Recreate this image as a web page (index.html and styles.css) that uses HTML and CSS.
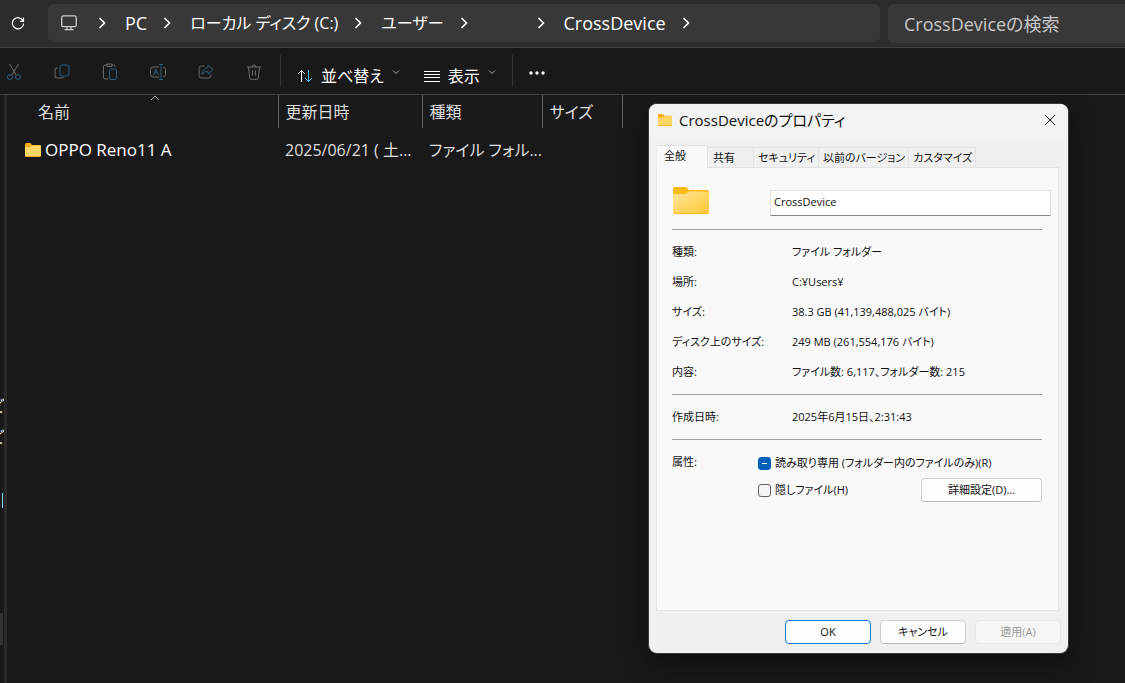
FILE: index.html
```html
<!DOCTYPE html>
<html lang="ja">
<head>
<meta charset="utf-8">
<title>CrossDevice</title>
<link rel="stylesheet" href="styles.css">
</head>
<body>

<header class="topbar">
	<button class="refresh" aria-label="更新">
		<svg width="14" height="14" viewBox="0 0 14 14"><path d="M12.2 5.2A5.6 5.6 0 1 0 12.6 7.4M12.5 1.6V5.3H8.8"/></svg>
	</button>
	<nav class="address">
		<svg class="monitor" width="16" height="16" viewBox="0 0 16 16"><rect x="0.7" y="0.9" width="14.6" height="10.8" rx="1.8"/><path d="M6 12v2.6M10 12v2.6M3.5 14.6h9"/></svg>
		<svg class="sep" width="8" height="12" viewBox="0 0 8 12"><path d="M1.5 1l5 5-5 5"/></svg>
		<a href="#">PC</a>
		<svg class="sep" width="8" height="12" viewBox="0 0 8 12"><path d="M1.5 1l5 5-5 5"/></svg>
		<a class="kana" href="#">ローカル ディスク (C:)</a>
		<svg class="sep" width="8" height="12" viewBox="0 0 8 12"><path d="M1.5 1l5 5-5 5"/></svg>
		<a class="kana" href="#">ユーザー</a>
		<svg class="sep" width="8" height="12" viewBox="0 0 8 12"><path d="M1.5 1l5 5-5 5"/></svg>
		<span class="user"></span>
		<svg class="sep" width="8" height="12" viewBox="0 0 8 12"><path d="M1.5 1l5 5-5 5"/></svg>
		<a href="#">CrossDevice</a>
		<svg class="sep" width="8" height="12" viewBox="0 0 8 12"><path d="M1.5 1l5 5-5 5"/></svg>
	</nav>
	<input class="search" type="search" placeholder="CrossDeviceの検索" aria-label="検索">
</header>

<div class="toolbar">
	<div class="tools">
		<button aria-label="切り取り" disabled>
			<svg width="16" height="18" viewBox="0 0 16 18"><path d="M3.5 1l6.7 11M12.5 1L5.8 12"/><g class="blue"><circle cx="4" cy="14" r="2.5"/><circle cx="12" cy="14" r="2.5"/></g></svg>
		</button>
		<button aria-label="コピー" disabled>
			<svg width="16" height="18" viewBox="0 0 16 18"><path d="M4 5H3a2 2 0 0 0-2 2v6a2 2 0 0 0 2 2h5a2 2 0 0 0 1.8-1.2"/><rect class="blue" x="6" y="2" width="9" height="11" rx="2"/></svg>
		</button>
		<button aria-label="貼り付け" disabled>
			<svg width="16" height="18" viewBox="0 0 16 18"><path d="M6 16H3a1.5 1.5 0 0 1-1.5-1.5v-11A1.5 1.5 0 0 1 3 2h2M10 2h1.5A1.5 1.5 0 0 1 13 3.5V4M5 1h5v2.5H5z"/><rect class="blue" x="7.5" y="6" width="7" height="10.5" rx="1.5"/></svg>
		</button>
		<button aria-label="名前の変更" disabled>
			<svg width="16" height="18" viewBox="0 0 16 18"><path d="M9 14H3a2.5 2.5 0 0 1-2.5-2.5v-5A2.5 2.5 0 0 1 3 4h6M13 4a2.5 2.5 0 0 1 2.5 2.5v5A2.5 2.5 0 0 1 13 14"/><path class="blue" d="M3.5 12L6 6l2.5 6M4.4 10h3.2M11 2v14M9 1.5h4M9 16.5h4"/></svg>
		</button>
		<button aria-label="共有" disabled>
			<svg width="16" height="18" viewBox="0 0 16 18"><path d="M6 3H3.5A2.5 2.5 0 0 0 1 5.5v7A2.5 2.5 0 0 0 3.5 15h7a2.5 2.5 0 0 0 2.5-2.5V11"/><path class="blue" d="M10 2l5 4.5-5 4.5V8.5C7 8.3 5.5 9.3 4 11.5 4.3 7.5 6.5 4.9 10 4.6z"/></svg>
		</button>
		<button aria-label="削除" disabled>
			<svg width="16" height="18" viewBox="0 0 16 18"><path d="M1 4h14M6 4a2 2 0 0 1 4 0M2.5 4l1.2 11a1.5 1.5 0 0 0 1.5 1.3h5.6a1.5 1.5 0 0 0 1.5-1.3L13.5 4M6.5 7.5v5M9.5 7.5v5"/></svg>
		</button>
	</div>
	<button class="menu">
		<svg width="16" height="16" viewBox="0 0 16 16"><path d="M4.5 14V2.5M1 6l3.5-3.5L8 6"/><path class="bright" d="M11.5 2v11.5M8 10l3.5 3.5L15 10"/></svg>
		<span>並べ替え</span>
		<svg class="down" width="8" height="6" viewBox="0 0 8 6"><path d="M1 1.5l3 3 3-3"/></svg>
	</button>
	<button class="menu">
		<svg width="16" height="16" viewBox="0 0 16 16"><path d="M0 3.5h16M0 6.5h16M0 9.5h16M0 13.5h16"/></svg>
		<span>表示</span>
		<svg class="down" width="8" height="6" viewBox="0 0 8 6"><path d="M1 1.5l3 3 3-3"/></svg>
	</button>
	<button class="more" aria-label="その他">
		<svg width="18" height="4" viewBox="0 0 18 4"><circle cx="3" cy="2" r="1.7"/><circle cx="9" cy="2" r="1.7"/><circle cx="15" cy="2" r="1.7"/></svg>
	</button>
</div>

<main class="explorer">
	<aside class="tree">
		<ul>
			<li>ど</li>
			<li>ど</li>
			<li class="bar"></li>
		</ul>
		<div class="thumb"></div>
	</aside>
	<table class="files">
		<colgroup><col class="c-name"><col class="c-date"><col class="c-type"><col class="c-size"></colgroup>
		<thead>
			<tr>
				<th aria-sort="ascending">名前<svg class="sorted" width="10" height="6" viewBox="0 0 10 6"><path d="M1 5l4-4 4 4"/></svg></th>
				<th>更新日時</th>
				<th>種類</th>
				<th>サイズ</th>
			</tr>
		</thead>
		<tbody>
			<tr>
				<td class="name">
					<svg width="16" height="14" viewBox="0 0 36 28" preserveAspectRatio="none"><path fill="#f5ac10" d="M0 3a3 3 0 0 1 3-3h9l4 4h17a3 3 0 0 1 3 3v18a3 3 0 0 1-3 3H3a3 3 0 0 1-3-3z"/><path fill="#ffd766" d="M0 8h13l4-3h19v19a2 2 0 0 1-2 2H2a2 2 0 0 1-2-2z"/></svg>
					<span>OPPO Reno11 A</span>
				</td>
				<td>2025/06/21 ( 土...</td>
				<td>ファイル フォル...</td>
				<td></td>
			</tr>
		</tbody>
	</table>
</main>

<section class="dialog" role="dialog" aria-labelledby="dlg-title">
	<div class="titlebar">
		<svg width="14" height="12" viewBox="0 0 36 28" preserveAspectRatio="none"><path fill="#f5ac10" d="M0 3a3 3 0 0 1 3-3h9l4 4h17a3 3 0 0 1 3 3v18a3 3 0 0 1-3 3H3a3 3 0 0 1-3-3z"/><path fill="#ffd766" d="M0 8h13l4-3h19v19a2 2 0 0 1-2 2H2a2 2 0 0 1-2-2z"/></svg>
		<h1 id="dlg-title">CrossDeviceのプロパティ</h1>
		<button class="close" aria-label="閉じる">
			<svg width="12" height="12" viewBox="0 0 12 12"><path d="M1 1l10 10M11 1L1 11"/></svg>
		</button>
	</div>

	<div class="tabs" role="tablist">
		<button role="tab" aria-selected="true">全般</button>
		<button role="tab">共有</button>
		<button role="tab">セキュリティ</button>
		<button role="tab">以前のバージョン</button>
		<button role="tab">カスタマイズ</button>
	</div>

	<div class="panel" role="tabpanel">
		<div class="head">
			<svg width="36" height="27" viewBox="0 0 36 27">
				<defs><linearGradient id="fold" x1="0" y1="0" x2="1" y2="1"><stop offset="0" stop-color="#ffe59b"/><stop offset="1" stop-color="#ffc937"/></linearGradient></defs>
				<path fill="#f9b916" d="M0 2a2 2 0 0 1 2-2h10c1 0 1.5.3 2.2 1L16 3h18a2 2 0 0 1 2 2v20a2 2 0 0 1-2 2H2a2 2 0 0 1-2-2z"/>
				<path fill="url(#fold)" d="M0 7h12c1 0 1.7-.4 2.4-1.1L16 4.5h20V24a2 2 0 0 1-2 2H2a2 2 0 0 1-2-2z"/>
			</svg>
			<input class="filename" type="text" value="CrossDevice" aria-label="名前">
		</div>
		<dl>
			<dt>種類:</dt><dd>ファイル フォルダー</dd>
			<dt>場所:</dt><dd>C:¥Users¥</dd>
			<dt>サイズ:</dt><dd>38.3 GB (41,139,488,025 バイト)</dd>
			<dt>ディスク上のサイズ:</dt><dd>249 MB (261,554,176 バイト)</dd>
			<dt>内容:</dt><dd>ファイル数: 6,117、フォルダー数: 215</dd>
		</dl>
		<dl>
			<dt>作成日時:</dt><dd>2025年6月15日、2:31:43</dd>
		</dl>
		<div class="attrs">
			<span class="caption">属性:</span>
			<div class="checks">
				<label><input type="checkbox" id="readonly">読み取り専用 (フォルダー内のファイルのみ)(R)</label>
				<div class="line">
					<label><input type="checkbox">隠しファイル(H)</label>
					<button class="btn wide">詳細設定(D)...</button>
				</div>
			</div>
		</div>
	</div>

	<div class="actions">
		<button class="btn default">OK</button>
		<button class="btn">キャンセル</button>
		<button class="btn" disabled>適用(A)</button>
	</div>
</section>

<script>
// mixed state can't be set from markup
document.getElementById("readonly").indeterminate = true;
</script>

</body>
</html>
```
FILE: styles.css
```css
* {
	box-sizing: border-box;
}

html {
	height: 100%;
}

body {
	position: relative;
	display: flex;
	flex-direction: column;
	min-height: 100%;
	margin: 0;
	overflow: hidden;
	background: #191919;
	color: #fff;
	font: 16px/24px "Open Sans", "Noto Sans CJK JP", sans-serif;
	font-feature-settings: "palt";
}

button, input {
	margin: 0;
	padding: 0;
	border: 0;
	background: none;
	color: inherit;
	font: inherit;
	font-feature-settings: inherit;
}

svg {
	flex: none;
	fill: none;
	stroke: currentColor;
}

a {
	color: inherit;
	text-decoration: none;
}

/* address row */
.topbar {
	display: flex;
	align-items: flex-start;
	height: 48px;
	padding-top: 4px;
	background: #2c2c2c;
	border-bottom: 1px solid #414141;
}

.refresh {
	display: flex;
	flex: 0 0 48px;
	align-items: center;
	height: 38px;
	padding-left: 11px;
	stroke-width: 1.2;
}

.address {
	display: flex;
	flex: 1;
	align-items: center;
	height: 38px;
	padding-left: 13px;
	border-radius: 5px;
	background: #383838;
	font-size: 18px;
	white-space: nowrap;
}
.address .kana {
	font-size: 16px;
}

.monitor {
	color: #ccc;
	stroke-width: 1.3;
}

.sep {
	margin: 0 19px 0 16px;
	stroke-width: 1.6;
}
.monitor + .sep {
	margin-left: 21px;
}

.user {
	width: 34px;
}

.search {
	flex: 0 0 237px;
	min-width: 0;
	height: 39px;
	margin-left: 8px;
	padding-left: 16px;
	border-radius: 5px 0 0 5px;
	background: #383838;
	font-size: 18px;
}
.search::placeholder {
	color: #c8c8c8;
}

/* command row */
.toolbar {
	display: flex;
	align-items: center;
	height: 47px;
	border-bottom: 1px solid #414141;
}

.tools {
	display: flex;
	gap: 32px;
	height: 32px;
	padding: 2px 18px 0 6px;
	border-right: 1px solid #333;
}
.tools button {
	display: flex;
	align-items: center;
	color: #6d6d6d;
}
.tools .blue {
	stroke: #2c5e7c;
}

.menu {
	display: flex;
	align-items: center;
	gap: 8px;
	height: 32px;
	padding: 10px 0 0 16px;
}
.menu + .menu {
	padding: 10px 16px 0 24px;
	border-right: 1px solid #333;
}
.bright {
	stroke: #4cc2ff;
}
.down {
	margin-bottom: 8px;
	color: #aaa;
}

.more {
	display: flex;
	padding: 3px 15px 0;
}
.more svg {
	fill: #fff;
	stroke: none;
}

/* file area */
.explorer {
	display: flex;
	flex: 1;
}

.tree {
	flex: 0 0 7px;
	padding-top: 299px;
	border-right: 3px solid #2a2a2a;
	overflow: hidden;
}
.tree ul {
	margin: 0;
	padding: 0;
	list-style: none;
}
.tree li {
	display: flex;
	justify-content: flex-end;
	height: 31px;
}
.tree .bar {
	width: 3px;
	height: 15px;
	margin-top: 37px;
	border-right: 1px solid #8fdcff;
}
.thumb {
	width: 3px;
	height: 32px;
	margin-top: 105px;
	background: #333;
}

.files {
	align-self: flex-start;
	width: 615px;
	border-collapse: collapse;
	table-layout: fixed;
	color: #dedede;
	white-space: nowrap;
}
.c-name { width: 271px; }
.c-date { width: 144px; }
.c-type { width: 120px; }
.c-size { width: 80px; }

th {
	position: relative;
	height: 33px;
	padding: 0 0 0 7px;
	border-right: 1px solid #636363;
	font-weight: normal;
	text-align: left;
}
th:first-child {
	padding-left: 31px;
}
.sorted {
	position: absolute;
	top: 0;
	left: 143px;
	color: #aaa;
}

td {
	height: 44px;
	padding: 0 0 0 7px;
}
td.name {
	display: flex;
	align-items: center;
	gap: 4px;
	padding-left: 18px;
	color: #fff;
	font-size: 17px;
}
.name svg, .titlebar > svg, .head svg {
	stroke: none;
}

/* properties window */
.dialog {
	position: absolute;
	top: 104px;
	left: 649px;
	width: 419px;
	border-radius: 8px;
	background: #f0f0f0;
	box-shadow: 0 0 0 1px #3a3a3a, 0 10px 28px rgba(0, 0, 0, .5);
	color: #111;
	font-size: 11px;
	line-height: 18px;
	overflow: hidden;
}

.titlebar {
	display: flex;
	align-items: center;
	gap: 7px;
	height: 33px;
	padding: 0 12px 1px 9px;
	background: #f3f3f3;
}
.titlebar h1 {
	flex: 1;
	margin: 0;
	font-size: 15px;
	font-weight: normal;
}
.close {
	display: flex;
}

.tabs {
	display: flex;
	align-items: flex-end;
	margin-top: 8px;
	padding: 0 8px;
}
.tabs button {
	height: 20px;
	padding: 0 3px 0 4px;
	border: 1px solid #e3e3e3;
	border-width: 1px 1px 0 0;
	white-space: nowrap;
}
.tabs button:nth-child(2) {
	padding: 0 18px 0 5px;
}
.tabs [aria-selected] {
	height: 23px;
	margin-bottom: -1px;
	padding: 0 21px 2px 7px;
	background: #f9f9f9;
}

.panel {
	min-height: 444px;
	margin: 0 9px 0 7px;
	padding: 0 16px 0 15px;
	border: 1px solid #e3e3e3;
	background: #f9f9f9;
}

.head {
	display: flex;
	align-items: flex-start;
	justify-content: space-between;
	height: 61px;
	margin-right: -9px;
	padding: 19px 0 0 1px;
}
.filename {
	width: 281px;
	height: 26px;
	margin-top: 3px;
	padding: 0 3px 4px;
	border: 1px solid #e5e5e5;
	border-bottom-color: #868686;
	background: #fff;
}

dl {
	display: grid;
	grid-template-columns: 120px 1fr;
	margin: 0;
	padding: 7px 0;
	border-top: 1px solid #a0a0a0;
	line-height: 30px;
	white-space: nowrap;
}
dd {
	margin: 0;
}

.attrs {
	display: flex;
	padding-top: 13px;
	border-top: 1px solid #a0a0a0;
}
.caption {
	width: 86px;
}
.checks {
	flex: 1;
	padding-top: 1px;
}
.checks label {
	display: flex;
	align-items: center;
	gap: 4px;
	white-space: nowrap;
}
.line {
	display: flex;
	align-items: center;
	justify-content: space-between;
	margin-top: 6px;
}

[type=checkbox] {
	display: flex;
	align-items: center;
	justify-content: center;
	width: 13px;
	height: 13px;
	border: 1px solid #626262;
	border-radius: 3px;
	background: #f5f5f5;
	appearance: none;
}
[type=checkbox]:indeterminate {
	border-color: #005fb8;
	background: #005fb8;
}
[type=checkbox]:indeterminate::before {
	content: "";
	width: 5px;
	height: 1px;
	background: #fff;
}

.btn {
	width: 86px;
	height: 24px;
	border: 1px solid #d0d0d0;
	border-bottom-color: #bbb;
	border-radius: 4px;
	background: #fdfdfd;
	line-height: 20px;
}
.btn.wide {
	width: 121px;
}
.btn.default {
	border-color: #0078d4;
}
.btn:disabled {
	border-color: #e6e6e6;
	background: #f6f6f6;
	color: #9a9a9a;
}

.actions {
	display: flex;
	justify-content: flex-end;
	gap: 9px;
	padding: 9px 7px 9px;
}
```
